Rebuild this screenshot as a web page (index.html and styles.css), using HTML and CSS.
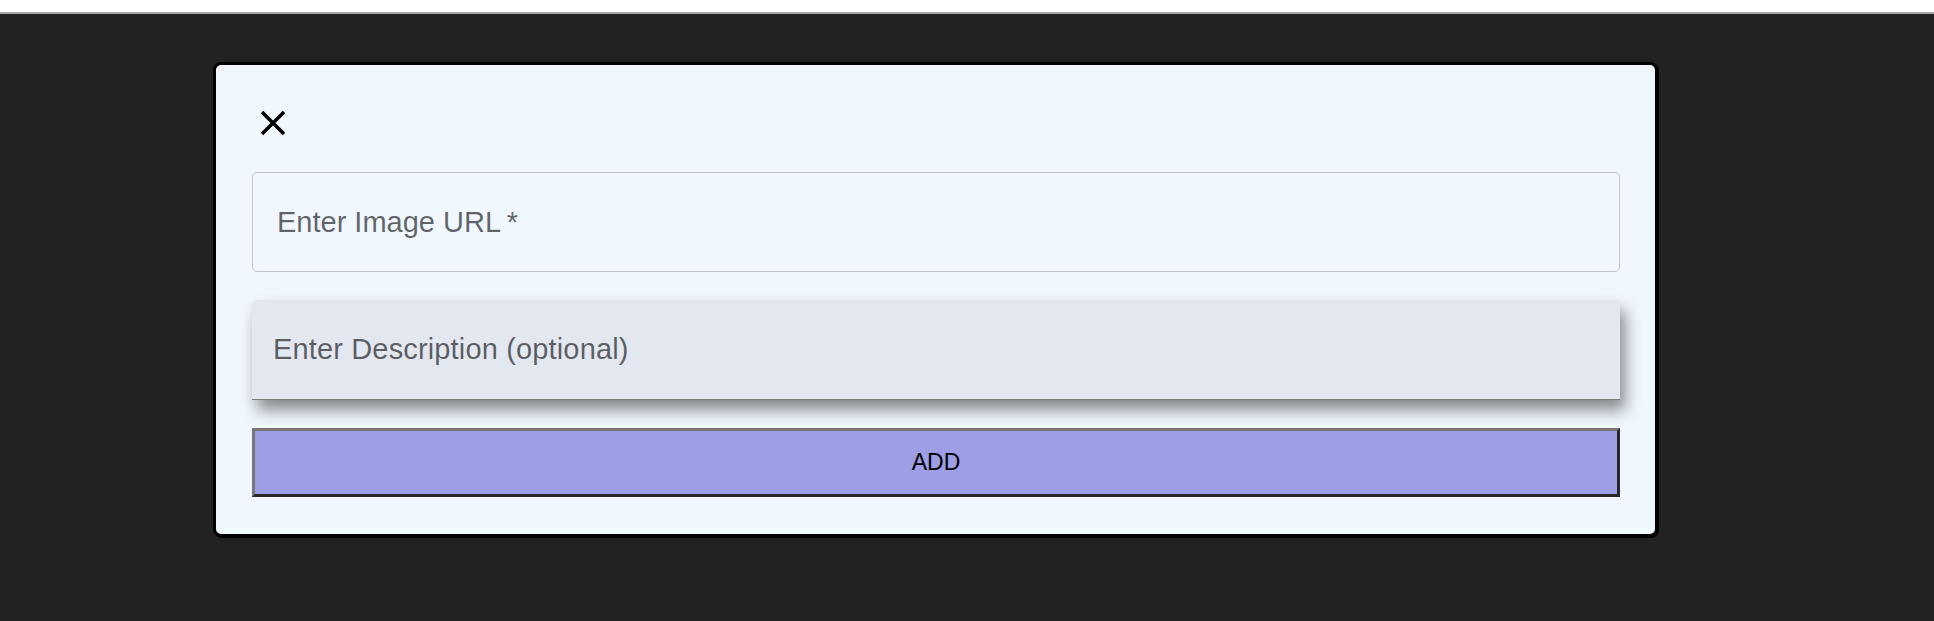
FILE: index.html
```html
<!DOCTYPE html>
<html lang="en">
<head>
<meta charset="utf-8">
<title>Add Image</title>
<link rel="stylesheet" href="styles.css">
</head>
<body>
<div class="topbar"></div>
<main class="stage">
  <section class="modal">
    <div class="close-row">
      <button class="close-btn" aria-label="Close">
        <svg viewBox="0 0 24 24" width="42" height="42"><path d="M19 6.41 17.59 5 12 10.59 6.41 5 5 6.41 10.59 12 5 17.59 6.41 19 12 13.41 17.59 19 19 17.59 13.41 12z" fill="#000"/></svg>
      </button>
    </div>
    <div class="field field-outlined"><span class="label">Enter Image URL&thinsp;*</span></div>
    <div class="field field-filled"><span class="label label-wide">Enter Description (optional)</span></div>
    <button class="add-btn">ADD</button>
  </section>
</main>
</body>
</html>
```
FILE: styles.css
```css
html, body {
  margin: 0;
  padding: 0;
  height: 100%;
}
body {
  background: #222222;
  font-family: "Liberation Sans", Arial, sans-serif;
  display: flex;
  flex-direction: column;
}
.topbar {
  height: 12px;
  background: #ffffff;
  border-bottom: 2px solid #a8a8a8;
  flex: none;
}
.stage {
  flex: 1;
  padding-top: 48px;
  padding-left: 213px;
}
.modal {
  width: 1368px;
  padding: 37px 35px 37px 36px;
  background: #f0f7ff;
  border: 3px solid #000;
  border-radius: 8px;
  box-shadow: 1px 1px 0 #000;
  display: flex;
  flex-direction: column;
  gap: 28px;
}
.close-row {
  height: 42px;
  display: flex;
}
.close-btn {
  width: 42px;
  height: 42px;
  padding: 0;
  margin: 0;
  border: 0;
  background: transparent;
  display: block;
}
.close-btn svg {
  display: block;
}
.field {
  height: 100px;
  box-sizing: border-box;
  display: flex;
  align-items: center;
  font-size: 29px;
  color: rgba(0, 0, 0, 0.6);
}
.label-wide {
  letter-spacing: 0.15px;
}
.field-outlined {
  border: 1px solid #c1c3c6;
  border-radius: 5px;
  padding-left: 24px;
}
.field-filled {
  background: #e2e7f0;
  border-bottom: 1px solid #7a7a7a;
  border-radius: 5px 5px 0 0;
  padding-left: 21px;
  padding-bottom: 1px;
  box-shadow: 5px 10px 16px rgba(0, 0, 0, 0.45);
}
.add-btn {
  height: 69px;
  margin: 0;
  background: #9e9ee6;
  border-style: solid;
  border-width: 3px;
  border-color: #777777 #262626 #262626 #777777;
  font-family: "Liberation Sans", Arial, sans-serif;
  font-size: 23px;
  color: #000;
  padding: 0;
}
```
